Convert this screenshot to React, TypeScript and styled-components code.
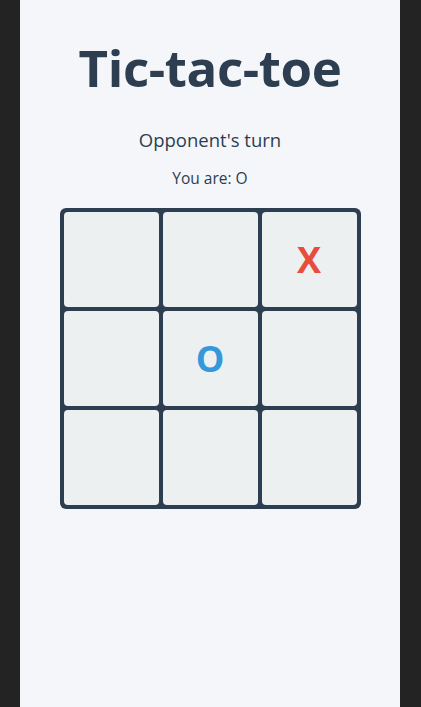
import React from "react";
import styled, { createGlobalStyle } from "styled-components";

const GlobalStyle = createGlobalStyle`
  html, body {
    margin: 0;
    padding: 0;
    background: #232323;
  }
  body {
    font-family: "Open Sans", "Noto Sans", sans-serif;
  }
`;

const Page = styled.div`
  width: 380px;
  min-height: 707px;
  margin: 0 auto 0 20px;
  background: #f4f6f9;
  color: #2c3e50;
  display: flex;
  flex-direction: column;
  align-items: center;
  padding-top: 34px;
  box-sizing: border-box;
`;

const Title = styled.h1`
  margin: 0;
  font-size: 51px;
  line-height: 67px;
  font-weight: 700;
  letter-spacing: -0.4px;
`;

const Status = styled.div`
  margin-top: 27px;
  font-size: 18.5px;
  line-height: 24px;
`;

const Role = styled.div`
  margin-top: 16px;
  font-size: 15.5px;
  line-height: 20px;
`;

const Board = styled.div`
  margin-top: 20px;
  display: grid;
  grid-template-columns: repeat(3, 95px);
  grid-template-rows: repeat(3, 95px);
  gap: 4px;
  padding: 4px;
  background: #2c3e50;
  border-radius: 6px;
`;

const Cell = styled.div<{ $mark?: "X" | "O" }>`
  background: #ecf0f1;
  border-radius: 4px;
  display: flex;
  align-items: center;
  justify-content: center;
  font-size: 36px;
  font-weight: 700;
  color: ${(p) => (p.$mark === "X" ? "#e74c3c" : "#3498db")};
`;

const board: ("X" | "O" | null)[] = [null, null, "X", null, "O", null, null, null, null];

export default function App() {
  return (
    <>
      <GlobalStyle />
      <Page>
        <Title>Tic-tac-toe</Title>
        <Status>Opponent's turn</Status>
        <Role>You are: O</Role>
        <Board>
          {board.map((m, i) => (
            <Cell key={i} $mark={m ?? undefined}>
              {m}
            </Cell>
          ))}
        </Board>
      </Page>
    </>
  );
}
